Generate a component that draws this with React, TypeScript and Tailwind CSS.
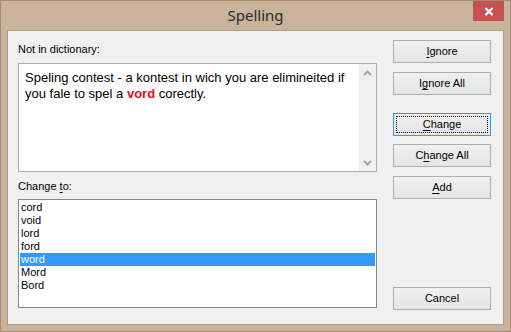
import React from "react";

const sans = { fontFamily: '"Liberation Sans", Arial, sans-serif' };

function Btn({ children, focused = false, className = "" }: { children: React.ReactNode; focused?: boolean; className?: string }) {
  return (
    <div
      className={`relative h-[23px] w-[98px] border flex items-center justify-center text-[11px] text-black bg-gradient-to-b from-[#f0f0f0] to-[#e5e5e5] ${
        focused ? "border-[#3399ff]" : "border-[#adadad]"
      } ${className}`}
    >
      {focused && <div className="absolute inset-[2px] border border-dotted border-black" />}
      <span className="relative leading-[13px]">{children}</span>
    </div>
  );
}

const U = ({ children }: { children: React.ReactNode }) => (
  <span className="underline underline-offset-[2px] decoration-[1px]">{children}</span>
);

function Chevron({ up }: { up: boolean }) {
  return (
    <svg width="9" height="6" viewBox="0 0 9 6">
      <path
        d={up ? "M1 5 L4.5 1.5 L8 5" : "M1 1 L4.5 4.5 L8 1"}
        fill="none"
        stroke="#a3a3a3"
        strokeWidth="2"
      />
    </svg>
  );
}

export default function App() {
  const items = ["cord", "void", "lord", "ford", "word", "Mord", "Bord"];
  return (
    <div className="w-[511px] h-[332px] bg-[#c9b39b] border border-[#a38d75] flex flex-col" style={sans}>
      <div className="relative h-[29px] shrink-0 flex items-center justify-center">
        <span
          className="text-[15px] text-[#2b2b2b] leading-none -mt-[1px]"
          style={{ fontFamily: '"Noto Sans", "Open Sans", sans-serif' }}
        >
          Spelling
        </span>
        <div className="absolute right-[6px] top-0 w-[31px] h-[20px] bg-[#c75050] flex items-center justify-center">
          <svg width="10" height="9" viewBox="0 0 10 9">
            <path d="M1.5 1 L8.5 8 M8.5 1 L1.5 8" stroke="#ffffff" strokeWidth="2.2" />
          </svg>
        </div>
      </div>
      <div className="mx-[6px] h-[295px] shrink-0 border border-[#ae9c88] bg-[#f0f0f0] flex items-start pl-[10px]">
        <div className="w-[359px] pt-[12px] flex flex-col">
          <div className="text-[11px] leading-[13px] text-black">Not in dictionary:</div>
          <div className="mt-[7px] h-[109px] border border-[#abadb3] bg-white flex">
            <div className="flex-1 pl-[6px] pt-[6px] text-[13px] leading-[16px] text-black">
              Speling contest - a kontest in wich you are elimineited if
              <br />
              you fale to spel a <span className="font-bold text-[#ee0a1e]">vord</span> corectly.
            </div>
            <div className="w-[17px] bg-[#f0f0f0] flex flex-col justify-between">
              <div className="h-[17px] flex items-center justify-center">
                <Chevron up />
              </div>
              <div className="h-[17px] flex items-center justify-center">
                <Chevron up={false} />
              </div>
            </div>
          </div>
          <div className="mt-[8px] text-[11px] leading-[13px] text-black">
            Change <U>t</U>o:
          </div>
          <div className="mt-[6px] h-[109px] border border-[#828790] bg-white p-[1px] pt-[1px]">
            {items.map((it) => (
              <div
                key={it}
                className={`h-[13px] leading-[13px] text-[11px] pl-[1px] ${
                  it === "word" ? "bg-[#3399ff] text-white" : "text-black"
                }`}
              >
                {it}
              </div>
            ))}
          </div>
        </div>
        <div className="ml-[16px] pt-[9px] flex flex-col">
          <Btn>
            <U>I</U>gnore
          </Btn>
          <Btn className="mt-[9px]">
            I<U>g</U>nore All
          </Btn>
          <Btn focused className="mt-[18px]">
            <U>C</U>hange
          </Btn>
          <Btn className="mt-[8px]">
            C<U>h</U>ange All
          </Btn>
          <Btn className="mt-[9px]">
            <U>A</U>dd
          </Btn>
          <Btn className="mt-[88px]">Cancel</Btn>
        </div>
      </div>
    </div>
  );
}
